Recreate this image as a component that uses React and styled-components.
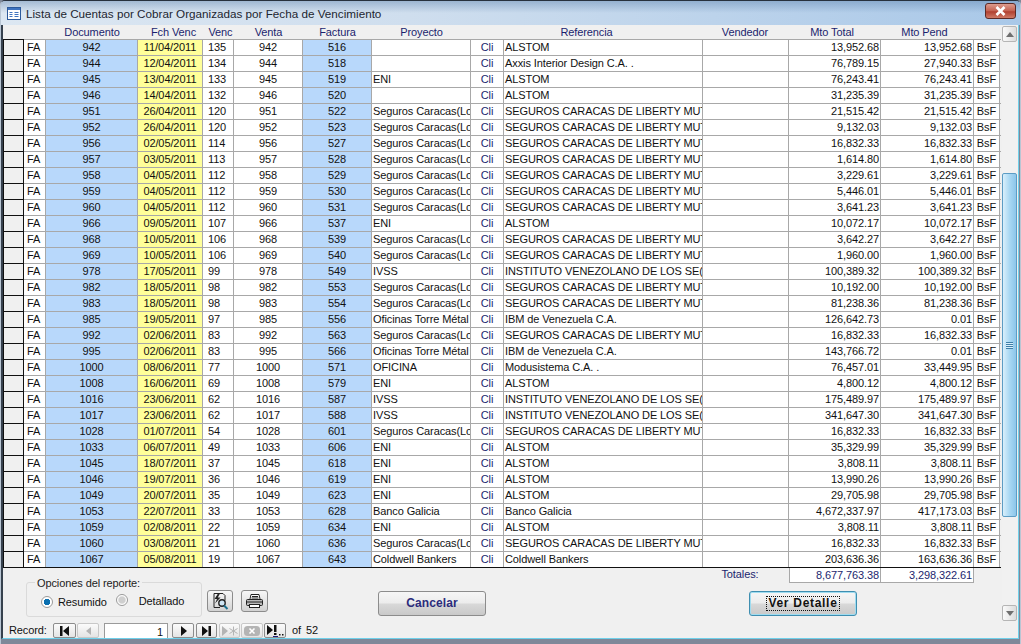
import React from 'react'
import styled, { createGlobalStyle } from 'styled-components'

const GlobalStyle = createGlobalStyle`
  html, body {
    margin: 0;
    padding: 0;
    width: 1021px;
    height: 644px;
    overflow: hidden;
    background: #7f8899;
  }
`

const COLUMNS = '21px 22px 92px 65px 31px 69px 69px 99px 33px 199px 86px 92px 93px 26px'

const rows = [
  ['942', '11/04/2011', '135', '516', '', 'ALSTOM', '13,952.68', '13,952.68'],
  ['944', '12/04/2011', '134', '518', '', 'Axxis Interior Design C.A. .', '76,789.15', '27,940.33'],
  ['945', '13/04/2011', '133', '519', 'ENI', 'ALSTOM', '76,243.41', '76,243.41'],
  ['946', '14/04/2011', '132', '520', '', 'ALSTOM', '31,235.39', '31,235.39'],
  ['951', '26/04/2011', '120', '522', 'Seguros Caracas(Lo', 'SEGUROS CARACAS DE LIBERTY MUT', '21,515.42', '21,515.42'],
  ['952', '26/04/2011', '120', '523', 'Seguros Caracas(Lo', 'SEGUROS CARACAS DE LIBERTY MUT', '9,132.03', '9,132.03'],
  ['956', '02/05/2011', '114', '527', 'Seguros Caracas(Lo', 'SEGUROS CARACAS DE LIBERTY MUT', '16,832.33', '16,832.33'],
  ['957', '03/05/2011', '113', '528', 'Seguros Caracas(Lo', 'SEGUROS CARACAS DE LIBERTY MUT', '1,614.80', '1,614.80'],
  ['958', '04/05/2011', '112', '529', 'Seguros Caracas(Lo', 'SEGUROS CARACAS DE LIBERTY MUT', '3,229.61', '3,229.61'],
  ['959', '04/05/2011', '112', '530', 'Seguros Caracas(Lo', 'SEGUROS CARACAS DE LIBERTY MUT', '5,446.01', '5,446.01'],
  ['960', '04/05/2011', '112', '531', 'Seguros Caracas(Lo', 'SEGUROS CARACAS DE LIBERTY MUT', '3,641.23', '3,641.23'],
  ['966', '09/05/2011', '107', '537', 'ENI', 'ALSTOM', '10,072.17', '10,072.17'],
  ['968', '10/05/2011', '106', '539', 'Seguros Caracas(Lo', 'SEGUROS CARACAS DE LIBERTY MUT', '3,642.27', '3,642.27'],
  ['969', '10/05/2011', '106', '540', 'Seguros Caracas(Lo', 'SEGUROS CARACAS DE LIBERTY MUT', '1,960.00', '1,960.00'],
  ['978', '17/05/2011', '99', '549', 'IVSS', 'INSTITUTO VENEZOLANO DE LOS SE(', '100,389.32', '100,389.32'],
  ['982', '18/05/2011', '98', '553', 'Seguros Caracas(Lo', 'SEGUROS CARACAS DE LIBERTY MUT', '10,192.00', '10,192.00'],
  ['983', '18/05/2011', '98', '554', 'Seguros Caracas(Lo', 'SEGUROS CARACAS DE LIBERTY MUT', '81,238.36', '81,238.36'],
  ['985', '19/05/2011', '97', '556', 'Oficinas Torre Métal', 'IBM de Venezuela C.A.', '126,642.73', '0.01'],
  ['992', '02/06/2011', '83', '563', 'Seguros Caracas(Lo', 'SEGUROS CARACAS DE LIBERTY MUT', '16,832.33', '16,832.33'],
  ['995', '02/06/2011', '83', '566', 'Oficinas Torre Métal', 'IBM de Venezuela C.A.', '143,766.72', '0.01'],
  ['1000', '08/06/2011', '77', '571', 'OFICINA', 'Modusistema C.A. .', '76,457.01', '33,449.95'],
  ['1008', '16/06/2011', '69', '579', 'ENI', 'ALSTOM', '4,800.12', '4,800.12'],
  ['1016', '23/06/2011', '62', '587', 'IVSS', 'INSTITUTO VENEZOLANO DE LOS SE(', '175,489.97', '175,489.97'],
  ['1017', '23/06/2011', '62', '588', 'IVSS', 'INSTITUTO VENEZOLANO DE LOS SE(', '341,647.30', '341,647.30'],
  ['1028', '01/07/2011', '54', '601', 'Seguros Caracas(Lo', 'SEGUROS CARACAS DE LIBERTY MUT', '16,832.33', '16,832.33'],
  ['1033', '06/07/2011', '49', '606', 'ENI', 'ALSTOM', '35,329.99', '35,329.99'],
  ['1045', '18/07/2011', '37', '618', 'ENI', 'ALSTOM', '3,808.11', '3,808.11'],
  ['1046', '19/07/2011', '36', '619', 'ENI', 'ALSTOM', '13,990.26', '13,990.26'],
  ['1049', '20/07/2011', '35', '623', 'ENI', 'ALSTOM', '29,705.98', '29,705.98'],
  ['1053', '22/07/2011', '33', '628', 'Banco Galicia', 'Banco Galicia', '4,672,337.97', '417,173.03'],
  ['1059', '02/08/2011', '22', '634', 'ENI', 'ALSTOM', '3,808.11', '3,808.11'],
  ['1060', '03/08/2011', '21', '636', 'Seguros Caracas(Lo', 'SEGUROS CARACAS DE LIBERTY MUT', '16,832.33', '16,832.33'],
  ['1067', '05/08/2011', '19', '643', 'Coldwell Bankers', 'Coldwell Bankers', '203,636.36', '163,636.36'],
]

const Window = styled.div`
  width: 1021px;
  height: 644px;
  box-sizing: border-box;
  display: flex;
  flex-direction: column;
  background: #7f8899;
  border-top: 1px solid #27313d;
  border-left: 1px solid #b9c6d4;
  border-right: 1px solid #b9c6d4;
  border-radius: 5px 5px 0 0;
  font-family: "Liberation Sans", Arial, sans-serif;
  font-size: 11px;
  letter-spacing: -0.1px;
  color: #111;
  overflow: hidden;
`

const TitleBar = styled.div`
  height: 24px;
  flex: none;
  display: flex;
  align-items: center;
  gap: 5px;
  padding: 0 4px 0 6px;
  box-sizing: border-box;
  font-size: 11.7px;
  letter-spacing: 0;
  color: #1c2530;
  background: linear-gradient(rgba(80, 120, 165, 0.4), rgba(80, 120, 165, 0) 12px),
    linear-gradient(90deg, #dce7f2, #cfdeee 40%, #a9c8e8);
`

const TitleText = styled.span`
  flex: 1;
`

const CloseButton = styled.div`
  width: 31px;
  height: 16px;
  margin-top: -5px;
  display: flex;
  align-items: center;
  justify-content: center;
  box-sizing: border-box;
  border: 1px solid #5c2a26;
  border-radius: 3px;
  background: linear-gradient(#dc9c8e, #c4604f 50%, #b04030 55%, #cf7a66);
`

const Client = styled.div`
  height: 614px;
  flex: none;
  display: flex;
  box-sizing: border-box;
  background: #f0f0f0;
  border-left: 2px solid #36414e;
  border-bottom: 1px solid #6fd0ea;
  border-right: 1px solid #6fd0ea;
  margin-right: 1px;
`

const Main = styled.div`
  width: 998px;
  flex: none;
  display: flex;
  flex-direction: column;
`

const HeaderRow = styled.div`
  display: grid;
  grid-template-columns: ${COLUMNS};
  height: 14px;
  color: #1b1f6e;
  line-height: 14px;
`

const HeaderCell = styled.div`
  text-align: center;
  white-space: nowrap;
  grid-column: ${(p) => p.$col} / span 1;
  padding-left: ${(p) => (p.$dx > 0 ? p.$dx * 2 : 0)}px;
  padding-right: ${(p) => (p.$dx < 0 ? -p.$dx * 2 : 0)}px;
`

const Table = styled.div`
  border-bottom: 1px solid #111;
`

const Row = styled.div`
  display: grid;
  grid-template-columns: ${COLUMNS};
  height: 16px;
  box-sizing: border-box;
  border-top: 1px solid #a8a8a8;
`

const Selector = styled.div`
  background: #f0f0f0;
  box-sizing: border-box;
  border-left: 1px solid #111;
  border-right: 1px solid #111;
  box-shadow: 0 -1px 0 #111;
`

const Cell = styled.div`
  height: 15px;
  line-height: 15px;
  box-sizing: border-box;
  padding: 0 ${(p) => (p.$align === 'right' ? 1 : 0)}px 0 ${(p) => p.$pad ?? (p.$align === 'right' ? 0 : 1)}px;
  background: ${(p) => p.$bg || '#fff'};
  color: ${(p) => p.$color || '#111'};
  text-align: ${(p) => p.$align || 'left'};
  border-right: 1px solid #a8a8a8;
  white-space: nowrap;
  overflow: hidden;
`

const Footer = styled.div`
  flex: 1;
  display: flex;
  flex-direction: column;
`

const TotalsRow = styled.div`
  display: grid;
  grid-template-columns: ${COLUMNS};
  height: 14px;
`

const TotalsLabel = styled.div`
  grid-column: 11;
  line-height: 13px;
  text-align: center;
  padding-right: 12px;
  color: #1b1f6e;
`

const TotalCell = styled.div`
  height: 15px;
  line-height: 14px;
  box-sizing: border-box;
  padding-right: 1px;
  text-align: right;
  background: #fff;
  color: #1b1f6e;
  border: 1px solid #a8a8a8;
  border-top: none;
  border-left-width: ${(p) => (p.$first ? '1px' : '0')};
`

const Controls = styled.div`
  flex: 1;
  display: flex;
  align-items: flex-start;
  padding-left: 23px;
`

const GroupBox = styled.div`
  position: relative;
  width: 176px;
  height: 35px;
  box-sizing: border-box;
  border: 1px solid #dadada;
  border-radius: 3px;
  display: flex;
  align-items: center;
  padding: 4px 0 0 14px;
`

const Legend = styled.span`
  position: absolute;
  left: 8px;
  top: -6px;
  padding: 0 2px;
  background: #f0f0f0;
  color: #222;
`

const RadioLabel = styled.span`
  margin: 0 ${(p) => p.$right || 0}px 0 ${(p) => p.$left}px;
  position: relative;
  top: ${(p) => p.$top || 0}px;
`

const Radio = styled.span`
  width: 12px;
  height: 12px;
  flex: none;
  position: relative;
  top: ${(p) => p.$top || 0}px;
  box-sizing: border-box;
  border-radius: 50%;
  border: 1px solid #9a9a9a;
  background: ${(p) =>
    p.$on
      ? 'radial-gradient(circle, #0a6fb0 0 3px, #fff 3.5px)'
      : 'radial-gradient(circle, #cfcfcf 0 3px, #fff 4.5px)'};
`

const IconButton = styled.div`
  width: ${(p) => p.$w}px;
  height: 22px;
  margin: 8px 0 0 ${(p) => p.$ml}px;
  display: flex;
  align-items: center;
  justify-content: center;
  box-sizing: border-box;
  border: 1px solid #8c8c8c;
  border-radius: 3px;
  background: linear-gradient(#f7f7f7, #e6e6e6 50%, #d2d2d2);
`

const PushButton = styled.div`
  width: 108px;
  height: 25px;
  margin: 9px 0 0 ${(p) => p.$ml}px;
  display: flex;
  align-items: center;
  justify-content: center;
  box-sizing: border-box;
  border: 1px solid ${(p) => (p.$focus ? '#3f8eb0' : '#8c8c8c')};
  box-shadow: ${(p) => (p.$focus ? 'inset 0 0 0 1px #9fdcf0' : 'none')};
  border-radius: 3px;
  background: linear-gradient(#f6f6f6, #ececec 48%, #d8d8d8 52%, #c9c9c9);
  font-size: 12px;
  font-weight: bold;
  letter-spacing: ${(p) => (p.$focus ? '0.7px' : '0.1px')};
  color: ${(p) => (p.$focus ? '#111' : '#2c2c7c')};
`

const FocusText = styled.span`
  outline: ${(p) => (p.$focus ? '1px dotted #111' : 'none')};
  padding: 0 1px;
  line-height: 13px;
`

const NavBar = styled.div`
  height: 15px;
  flex: none;
  display: flex;
  align-items: flex-start;
  padding-left: 6px;
`

const NavLabel = styled.span`
  width: 44px;
  line-height: 15px;
`

const NavButton = styled.div`
  width: ${(p) => p.$w || 22}px;
  height: 15px;
  margin-left: ${(p) => p.$ml || 0}px;
  display: flex;
  align-items: center;
  justify-content: center;
  box-sizing: border-box;
  border: 1px solid ${(p) => (p.$off ? '#c8c8c8' : '#8c8c8c')};
  border-radius: 2px;
  background: linear-gradient(#fbfbfb, #e4e4e4);
`

const RecordBox = styled.div`
  width: 64px;
  height: 15px;
  margin-left: 5px;
  box-sizing: border-box;
  border: 1px solid #9a9a9a;
  border-bottom: none;
  background: #fff;
  padding-right: 4px;
  text-align: right;
  line-height: 17px;
`

const NavCount = styled.span`
  margin-left: 6px;
  line-height: 15px;
  word-spacing: 2px;
`

const ScrollBar = styled.div`
  width: 15px;
  margin: 1px 0 0 1px;
  height: 595px;
  flex: none;
  display: flex;
  flex-direction: column;
  background: #f1f1f1;
`

const ScrollArrow = styled.div`
  height: 16px;
  flex: none;
  display: flex;
  align-items: center;
  justify-content: center;
  box-sizing: border-box;
  border: 1px solid #b5b5b5;
  border-radius: 2px;
  background: linear-gradient(90deg, #fafafa, #dcdcdc);
`

const ScrollTrack = styled.div`
  flex: 1;
  padding-top: 131px;
  display: flex;
`

const ScrollThumb = styled.div`
  flex: 1;
  height: 344px;
  box-sizing: border-box;
  display: flex;
  align-items: center;
  justify-content: center;
  border: 1px solid #5c9cc4;
  border-radius: 2px;
  background: linear-gradient(90deg, #d9effb, #a9d8f3 50%, #8cc6ea);
`

const Grip = styled.div`
  width: 7px;
  height: 7px;
  background: repeating-linear-gradient(#3f7fa8 0 1px, #d9effb 1px 2px);
`

const Triangle = ({ dir }) => (
  <svg width="8" height="5" viewBox="0 0 8 5">
    <path d={dir === 'up' ? 'M0 5 L4 0 L8 5 Z' : 'M0 0 L4 5 L8 0 Z'} fill="#6f6f6f" />
  </svg>
)

const FormIcon = () => (
  <svg width="14" height="13" viewBox="0 0 14 13">
    <rect x="0.5" y="0.5" width="13" height="12" fill="#fff" stroke="#2c5a9c" />
    <rect x="1" y="1" width="12" height="2" fill="#3f74c0" />
    <path d="M2.5 5.5h3M2.5 7.5h3M2.5 9.5h3M7.5 5.5h4M7.5 7.5h4M7.5 9.5h4" stroke="#3f74c0" />
  </svg>
)

const CloseIcon = () => (
  <svg width="13" height="10" viewBox="0 0 13 10">
    <path d="M2.5 1 L10.5 9 M10.5 1 L2.5 9" stroke="#fff" strokeWidth="2.6" />
  </svg>
)

const PreviewIcon = () => (
  <svg width="18" height="18" viewBox="0 0 18 18" fill="none">
    <path d="M3 1.500h9l2 2v5M3 1.500v14h6" stroke="#222" />
    <path d="M7 1.500 L3.500 7 h2.500 L4 11.500 L9.500 5.500 H6.800 L9 1.500 Z" fill="#222" />
    <circle cx="11" cy="11" r="3.200" stroke="#222" strokeWidth="1.400" fill="#cfe6f5" />
    <path d="M13 13.500 L16.500 17" stroke="#1a6f8f" strokeWidth="2" />
  </svg>
)

const PrintIcon = () => (
  <svg width="19" height="16" viewBox="0 0 19 16" fill="none">
    <path d="M5 6 L6 1.500 h8 L15 6" fill="#fff" stroke="#222" />
    <path d="M7 3.500h6M6.500 5h7" stroke="#222" />
    <rect x="1.500" y="6.500" width="16" height="6" rx="1" fill="#bbb" stroke="#222" />
    <path d="M2 9h15" stroke="#222" />
    <rect x="4.500" y="11.500" width="10" height="3" fill="#fff" stroke="#222" />
  </svg>
)

const NavGlyph = ({ type, off }) => {
  const c = off ? '#b4b4b4' : '#111'
  if (type === 'first') return <svg width="11" height="10" viewBox="0 0 11 10"><path d="M1 0h2.500v10H1zM10 0v10L4 5z" fill={c} /></svg>
  if (type === 'prev') return <svg width="7" height="10" viewBox="0 0 7 10"><path d="M6 1v8L1 5z" fill={c} /></svg>
  if (type === 'next') return <svg width="7" height="10" viewBox="0 0 7 10"><path d="M1 0v10l6-5z" fill={c} /></svg>
  if (type === 'last') return <svg width="11" height="10" viewBox="0 0 11 10"><path d="M1 0v10l6-5zM7.500 0H10v10H7.500z" fill={c} /></svg>
  if (type === 'new')
    return (
      <svg width="16" height="10" viewBox="0 0 16 10">
        <path d="M0 0v10l6-5z" fill={c} />
        <path d="M11.500 0.500v9M7.500 2.500l8 5M15.500 2.500l-8 5" stroke={c} />
      </svg>
    )
  if (type === 'del')
    return (
      <svg width="16" height="10" viewBox="0 0 16 10">
        <rect width="16" height="10" rx="3.500" fill={c} />
        <path d="M5.500 2.500l5 5M10.500 2.500l-5 5" stroke="#fff" strokeWidth="1.600" />
      </svg>
    )
  return (
    <svg width="17" height="12" viewBox="0 0 17 12">
      <path d="M0 0v10l6-5z" fill={c} />
      <path d="M7 0h2.500v7H7zM7 8h2.500v2H7zM12 9h1.500v1.500H12zM15 9h1.500v1.500H15z" fill={c} />
      <path d="M6 11.500h5" stroke="#1a1a7a" />
    </svg>
  )
}

const headers = [
  [3, 'Documento', 0], [4, 'Fch Venc', 3], [5, 'Venc', 2], [6, 'Venta', 0], [7, 'Factura', 0],
  [8, 'Proyecto', 0], [10, 'Referencia', -17], [11, 'Vendedor', -1], [12, 'Mto Total', -3], [13, 'Mto Pend', -3],
]

const App = () => (
  <>
    <GlobalStyle />
    <Window>
      <TitleBar>
        <FormIcon />
        <TitleText>Lista de Cuentas por Cobrar Organizadas por Fecha de Vencimiento</TitleText>
        <CloseButton><CloseIcon /></CloseButton>
      </TitleBar>
      <Client>
        <Main>
          <HeaderRow>
            {headers.map(([col, label, dx]) => (
              <HeaderCell key={label} $col={col} $dx={dx}>{label}</HeaderCell>
            ))}
          </HeaderRow>
          <Table>
            {rows.map((r) => (
              <Row key={r[0]}>
                <Selector />
                <Cell $pad={3}>FA</Cell>
                <Cell $bg="#b8d8fb" $align="center" $pad={0}>{r[0]}</Cell>
                <Cell $bg="#ffff99" $align="center" $pad={0}>{r[1]}</Cell>
                <Cell $pad={5}>{r[2]}</Cell>
                <Cell $align="center" $pad={0}>{r[0]}</Cell>
                <Cell $bg="#b8d8fb" $align="center" $pad={0}>{r[3]}</Cell>
                <Cell>{r[4]}</Cell>
                <Cell $color="#1b1f6e" $align="center" $pad={0}>Cli</Cell>
                <Cell>{r[5]}</Cell>
                <Cell />
                <Cell $align="right">{r[6]}</Cell>
                <Cell $align="right">{r[7]}</Cell>
                <Cell $align="center" $pad={0}>BsF</Cell>
              </Row>
            ))}
          </Table>
          <Footer>
            <TotalsRow>
              <TotalsLabel>Totales:</TotalsLabel>
              <TotalCell $first>8,677,763.38</TotalCell>
              <TotalCell>3,298,322.61</TotalCell>
            </TotalsRow>
            <Controls>
              <GroupBox>
                <Legend>Opciones del reporte:</Legend>
                <Radio $on />
                <RadioLabel $left={5} $right={9}>Resumido</RadioLabel>
                <Radio $top={-2} />
                <RadioLabel $left={11} $top={-1}>Detallado</RadioLabel>
              </GroupBox>
              <IconButton $w={26} $ml={5}><PreviewIcon /></IconButton>
              <IconButton $w={27} $ml={8}><PrintIcon /></IconButton>
              <PushButton $ml={110}><FocusText>Cancelar</FocusText></PushButton>
              <PushButton $ml={263} $focus><FocusText $focus>Ver Detalle</FocusText></PushButton>
            </Controls>
            <NavBar>
              <NavLabel>Record:</NavLabel>
              <NavButton $w={23}><NavGlyph type="first" /></NavButton>
              <NavButton $ml={1} $off><NavGlyph type="prev" off /></NavButton>
              <RecordBox>1</RecordBox>
              <NavButton $ml={4}><NavGlyph type="next" /></NavButton>
              <NavButton $w={21} $ml={2}><NavGlyph type="last" /></NavButton>
              <NavButton $w={21} $ml={2} $off><NavGlyph type="new" off /></NavButton>
              <NavButton $ml={1} $off><NavGlyph type="del" off /></NavButton>
              <NavButton $ml={1}><NavGlyph type="filter" /></NavButton>
              <NavCount>of 52</NavCount>
            </NavBar>
          </Footer>
        </Main>
        <ScrollBar>
          <ScrollArrow><Triangle dir="up" /></ScrollArrow>
          <ScrollTrack>
            <ScrollThumb><Grip /></ScrollThumb>
          </ScrollTrack>
          <ScrollArrow><Triangle dir="down" /></ScrollArrow>
        </ScrollBar>
      </Client>
    </Window>
  </>
)

export default App
